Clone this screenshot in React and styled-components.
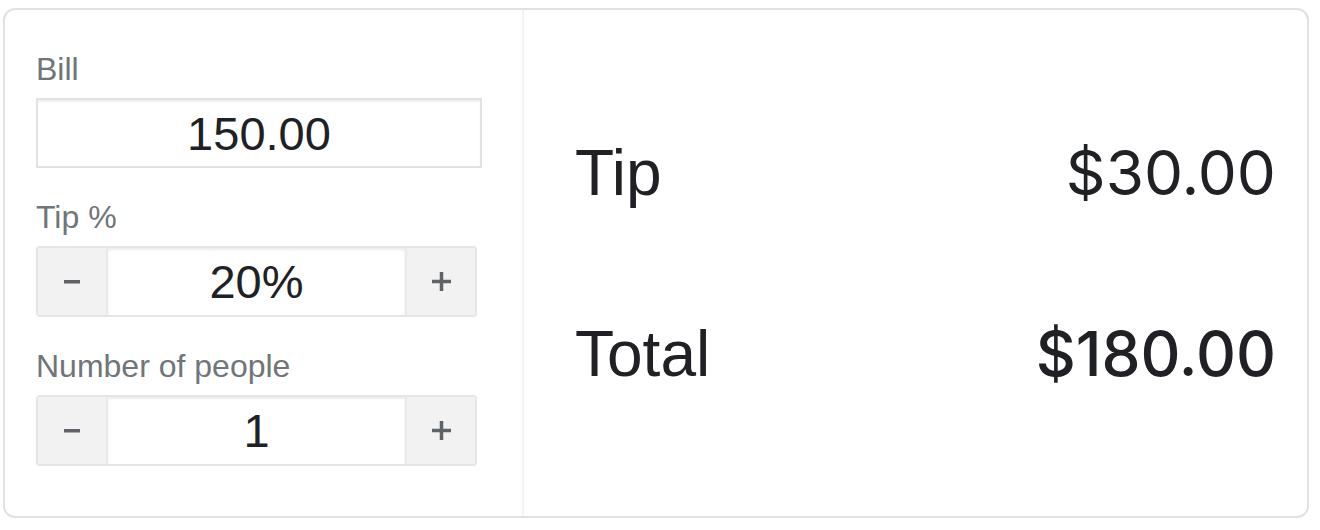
import React from 'react';
import styled, { createGlobalStyle } from 'styled-components';

const GlobalStyle = createGlobalStyle`
  body {
    margin: 0;
    background: #fff;
    font-family: "Liberation Sans", Arial, sans-serif;
  }
`;

const Card = styled.div`
  box-sizing: border-box;
  width: 1306px;
  height: 510px;
  margin: 8px 0 0 3px;
  border: 2px solid #dfe1e5;
  border-radius: 12px;
  display: grid;
  grid-template-columns: 519px 1fr;
  overflow: hidden;
`;

const Inputs = styled.div`
  box-sizing: border-box;
  border-right: 2px solid #f1f3f4;
  padding: 41px 0 0 31px;
  display: flex;
  flex-direction: column;
`;

const Field = styled.div`
  display: flex;
  flex-direction: column;
  margin-bottom: 31px;
`;

const Label = styled.label`
  font-family: "Liberation Sans", Arial, sans-serif;
  font-size: 32px;
  line-height: 36px;
  color: #70757a;
  margin-bottom: 11px;
`;

const TextBox = styled.input`
  box-sizing: border-box;
  width: ${(p) => p.$width}px;
  height: 70px;
  margin: 0;
  padding: 0;
  border: 2px solid #e0e2e5;
  box-shadow: inset 0 2px 2px rgba(0, 0, 0, 0.06);
  font-family: "Liberation Sans", Arial, sans-serif;
  font-size: 47px;
  color: #202124;
  text-align: center;
  outline: none;
  background: #fff;
`;

const Stepper = styled.div`
  box-sizing: border-box;
  width: 441px;
  height: 71px;
  display: flex;
  border: 2px solid #e3e5e8;
  border-radius: 4px;
  overflow: hidden;
`;

const StepButton = styled.button`
  width: 70px;
  flex: none;
  margin: 0;
  padding: 0;
  border: none;
  ${(p) => (p.$side === 'left' ? 'border-right' : 'border-left')}: 2px solid #e8eaed;
  background: #f2f2f2;
  display: flex;
  align-items: center;
  justify-content: center;
  color: #5f6368;
  cursor: pointer;
`;

const StepValue = styled(TextBox)`
  flex: 1;
  min-width: 0;
  width: auto;
  height: 100%;
  border: none;
  box-shadow: inset 0 2px 3px rgba(0, 0, 0, 0.08);
`;

const Results = styled.div`
  padding: 0 31px 0 51px;
  display: flex;
  flex-direction: column;
  justify-content: center;
  gap: 109px;
`;

const ResultRow = styled.div`
  display: flex;
  align-items: baseline;
  justify-content: space-between;
  line-height: 72px;
  color: #202124;
`;

const ResultLabel = styled.span`
  font-family: "Liberation Sans", Arial, sans-serif;
  font-size: 64px;
`;

const Amount = styled.span`
  font-family: Inter, "Open Sans", sans-serif;
  font-size: 62px;
  font-weight: ${(p) => (p.$strong ? 500 : 400)};
`;

const MinusIcon = () => (
  <svg width="16" height="4" viewBox="0 0 16 4">
    <rect x="0" y="0" width="16" height="3.5" fill="currentColor" />
  </svg>
);

const PlusIcon = () => (
  <svg width="19" height="19" viewBox="0 0 19 19">
    <rect x="0" y="7.75" width="19" height="3.5" fill="currentColor" />
    <rect x="7.75" y="0" width="3.5" height="19" fill="currentColor" />
  </svg>
);

function StepperField({ label, value }) {
  return (
    <Field>
      <Label>{label}</Label>
      <Stepper>
        <StepButton $side="left" aria-label="decrease">
          <MinusIcon />
        </StepButton>
        <StepValue value={value} readOnly />
        <StepButton $side="right" aria-label="increase">
          <PlusIcon />
        </StepButton>
      </Stepper>
    </Field>
  );
}

export default function App() {
  return (
    <>
      <GlobalStyle />
      <Card>
        <Inputs>
          <Field>
            <Label>Bill</Label>
            <TextBox $width={446} value="150.00" readOnly />
          </Field>
          <StepperField label="Tip %" value="20%" />
          <StepperField label="Number of people" value="1" />
        </Inputs>
        <Results>
          <ResultRow>
            <ResultLabel>Tip</ResultLabel>
            <Amount>$30.00</Amount>
          </ResultRow>
          <ResultRow>
            <ResultLabel>Total</ResultLabel>
            <Amount $strong>$180.00</Amount>
          </ResultRow>
        </Results>
      </Card>
    </>
  );
}
